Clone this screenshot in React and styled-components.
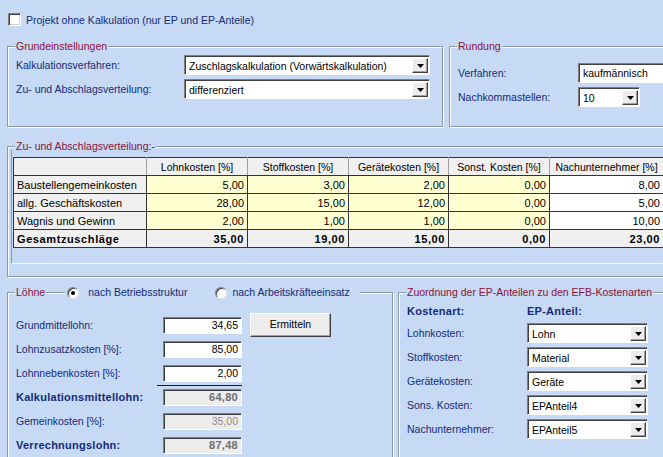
import React from "react";
import styled, { createGlobalStyle } from "styled-components";

const BG = "#c6daf5";
const NAVY = "#152a78";
const MAROON = "#8a1236";

const Global = createGlobalStyle`
  html, body { margin: 0; padding: 0; background: ${BG}; }
  body { font-family: "Liberation Sans", Arial, sans-serif; }
`;

const Page = styled.div`
  width: 663px;
  height: 457px;
  overflow: hidden;
  background: ${BG};
  padding-top: 13px;
  box-sizing: border-box;
  font-size: 10.5px;
  color: ${NAVY};
`;

const CheckRow = styled.label`
  display: flex;
  align-items: center;
  gap: 5px;
  margin-left: 8px;
  height: 13px;
`;

const CheckBox = styled.span`
  width: 13px;
  height: 13px;
  box-sizing: border-box;
  background: #fff;
  border: 1px solid;
  border-color: #808080 #fff #fff #808080;
  box-shadow: inset 1px 1px 0 #404040, inset -1px -1px 0 #d4d0c8;
`;

const Row = styled.div`
  display: flex;
  gap: ${(p) => p.$gap || 0}px;
  margin: ${(p) => p.$mt}px -20px 0 7px;
`;

const Group = styled.div`
  position: relative;
  box-sizing: border-box;
  flex: ${(p) => (p.$w ? "none" : "1")};
  width: ${(p) => (p.$w ? `${p.$w}px` : "auto")};
  height: ${(p) => p.$h}px;
  border: 1px solid #8b97ab;
  box-shadow: inset 1px 1px 0 #fff, 1px 1px 0 #fff;
  padding: ${(p) => p.$pad};
`;

const Title = styled.div`
  position: absolute;
  top: -7px;
  left: 7px;
  display: flex;
  align-items: center;
  height: 13px;
`;

const TitleText = styled.span`
  background: ${BG};
  color: ${MAROON};
  padding: 0 1px;
  line-height: 13px;
  white-space: nowrap;
`;

const RadioBar = styled.span`
  display: flex;
  align-items: center;
  margin-left: 19px;
  padding: 0 10px 0 2px;
  background: ${BG};
  line-height: 13px;
`;

const RadioItem = styled.span`
  display: flex;
  align-items: center;
  gap: ${(p) => p.$gap}px;
  margin-left: ${(p) => p.$ml || 0}px;
  white-space: nowrap;
`;

const RadioCircle = styled.span`
  width: 12px;
  height: 12px;
  box-sizing: border-box;
  border-radius: 50%;
  background: #fff;
  border: 1px solid;
  border-color: #808080 #e8e8e8 #e8e8e8 #808080;
  box-shadow: inset 1px 1px 0 #404040;
  display: flex;
  align-items: center;
  justify-content: center;
  &::after {
    content: "";
    width: 4px;
    height: 4px;
    border-radius: 50%;
    background: ${(p) => (p.$on ? "#000" : "transparent")};
  }
`;

const FormGrid = styled.div`
  display: grid;
  grid-template-columns: ${(p) => p.$cols};
  grid-template-rows: ${(p) => p.$rows};
  row-gap: ${(p) => p.$rg || 0}px;
  column-gap: ${(p) => p.$cg || 0}px;
  align-items: center;
`;

const Label = styled.span`
  color: ${NAVY};
  white-space: nowrap;
  font-weight: ${(p) => (p.$bold ? 700 : 400)};
  font-size: ${(p) => (p.$bold ? "11px" : "10.5px")};
  letter-spacing: ${(p) => (p.$bold ? "0.25px" : "0")};
`;

const Combo = styled.div`
  display: flex;
  box-sizing: border-box;
  width: ${(p) => p.$w}px;
  height: 20px;
  background: #fff;
  border: 1px solid;
  border-color: #7f7f7f #fff #fff #7f7f7f;
  box-shadow: inset 1px 1px 0 #404040;
  padding: 2px 1px 1px 2px;
  color: #000;
`;

const ComboText = styled.span`
  flex: 1;
  display: flex;
  align-items: center;
  padding-left: 2px;
  white-space: nowrap;
  overflow: hidden;
`;

const ComboButton = styled.span`
  width: 16px;
  flex: none;
  box-sizing: border-box;
  background: #ececec;
  border: 1px solid;
  border-color: #fff #404040 #404040 #fff;
  box-shadow: inset -1px -1px 0 #a0a0a0;
  display: flex;
  align-items: center;
  justify-content: center;
`;

const Field = styled.div`
  position: relative;
  box-sizing: border-box;
  width: ${(p) => p.$w}px;
  height: ${(p) => p.$h || 17}px;
  background: ${(p) => (p.$disabled ? "#ececec" : "#fff")};
  border: 1px solid;
  border-color: #7f7f7f #fff #fff #7f7f7f;
  box-shadow: inset 1px 1px 0 #404040;
  display: flex;
  align-items: center;
  justify-content: ${(p) => (p.$right ? "flex-end" : "flex-start")};
  padding: 0 3px 0 4px;
  color: ${(p) => (p.$disabled ? (p.$bold ? "#6e6e6e" : "#8c8c8c") : "#000")};
  font-weight: ${(p) => (p.$bold ? 700 : 400)};
  font-size: ${(p) => (p.$bold ? "11px" : "10.5px")};
  letter-spacing: ${(p) => (p.$bold ? "0.3px" : "0")};
  white-space: nowrap;
  &::after {
    content: "";
    display: ${(p) => (p.$underline ? "block" : "none")};
    position: absolute;
    left: -7px;
    right: -1px;
    bottom: -5px;
    height: 1px;
    background: #0b1a48;
  }
`;

const Button = styled.div`
  box-sizing: border-box;
  height: 24px;
  background: #ededed;
  border: 1px solid;
  border-color: #fff #404040 #404040 #fff;
  box-shadow: inset -1px -1px 0 #a0a0a0;
  color: #000;
  display: flex;
  align-items: center;
  justify-content: center;
  padding-bottom: 3px;
  align-self: stretch;
`;

const GridFrame = styled.div`
  margin: 3px 0 0 3px;
  height: 114px;
  box-sizing: border-box;
  border-left: 1px solid #8b97ab;
  border-bottom: 1px solid #f4f8ff;
  padding: 7px 0 0 1px;
`;

const Table = styled.table`
  border-collapse: collapse;
  table-layout: fixed;
  width: 650px;
  font-size: 11px;
  color: #000;
`;

const Th = styled.th`
  height: 17px;
  padding: 0;
  background: #f0f0f0;
  font-weight: 400;
  font-size: 10.5px;
  text-align: center;
  border: 1px solid #333;
  border-left-color: #a0a0a0;
  border-right-color: #a0a0a0;
  white-space: nowrap;
  &:first-child { border-left-color: #333; }
  &:last-child { border-right-color: #333; }
`;

const Td = styled.td`
  height: 17px;
  padding: 0 3px;
  border: 1px solid #333;
  white-space: nowrap;
  text-align: ${(p) => (p.$left ? "left" : "right")};
  background: ${(p) =>
    p.$tone === "yellow" ? "#ffffd2" : p.$tone === "white" ? "#fff" : "#f0f0f0"};
  font-weight: ${(p) => (p.$bold ? 700 : 400)};
  letter-spacing: ${(p) => (p.$bold ? "0.6px" : "0")};
`;

const Arrow = () => (
  <svg width="7" height="4" viewBox="0 0 7 4">
    <polygon points="0,0 7,0 3.5,4" fill="#000" />
  </svg>
);

const Select = ({ w, children }) => (
  <Combo $w={w}>
    <ComboText>{children}</ComboText>
    <ComboButton>
      <Arrow />
    </ComboButton>
  </Combo>
);

const cols = [133, 101, 101, 100, 101, 114];
const heads = ["", "Lohnkosten [%]", "Stoffkosten [%]", "Gerätekosten [%]", "Sonst. Kosten [%]", "Nachunternehmer [%]"];
const rows = [
  ["Baustellengemeinkosten", "5,00", "3,00", "2,00", "0,00", "8,00"],
  ["allg. Geschäftskosten", "28,00", "15,00", "12,00", "0,00", "5,00"],
  ["Wagnis und Gewinn", "2,00", "1,00", "1,00", "0,00", "10,00"],
];
const total = ["Gesamtzuschläge", "35,00", "19,00", "15,00", "0,00", "23,00"];

const mapping = [
  ["Lohnkosten:", "Lohn"],
  ["Stoffkosten:", "Material"],
  ["Gerätekosten:", "Geräte"],
  ["Sons. Kosten:", "EPAnteil4"],
  ["Nachunternehmer:", "EPAnteil5"],
];

export default function App() {
  return (
    <Page>
      <Global />
      <CheckRow>
        <CheckBox />
        <span>Projekt ohne Kalkulation (nur EP und EP-Anteile)</span>
      </CheckRow>

      <Row $mt={20} $gap={6}>
        <Group $w={436} $h={81} $pad="8px 0 0 8px">
          <Title>
            <TitleText>Grundeinstellungen</TitleText>
          </Title>
          <FormGrid $cols="168px 246px" $rows="20px 20px" $rg={4}>
            <Label>Kalkulationsverfahren:</Label>
            <Select w={246}>Zuschlagskalkulation (Vorwärtskalkulation)</Select>
            <Label>Zu- und Abschlagsverteilung:</Label>
            <Select w={246}>differenziert</Select>
          </FormGrid>
        </Group>
        <Group $h={81} $pad="16px 0 0 8px">
          <Title>
            <TitleText>Rundung</TitleText>
          </Title>
          <FormGrid $cols="120px 120px" $rows="20px 20px" $rg={4}>
            <Label>Verfahren:</Label>
            <Field $w={120} $h={20}>kaufmännisch</Field>
            <Label>Nachkommastellen:</Label>
            <Select w={62}>10</Select>
          </FormGrid>
        </Group>
      </Row>

      <Row $mt={19}>
        <Group $h={131} $pad="0">
          <Title>
            <TitleText>Zu- und Abschlagsverteilung:-</TitleText>
          </Title>
          <GridFrame>
            <Table>
              <colgroup>
                {cols.map((c, i) => (
                  <col key={i} style={{ width: c }} />
                ))}
              </colgroup>
              <thead>
                <tr>
                  {heads.map((h, i) => (
                    <Th key={i}>{h}</Th>
                  ))}
                </tr>
              </thead>
              <tbody>
                {rows.map((r, ri) => (
                  <tr key={ri}>
                    {r.map((v, i) => (
                      <Td
                        key={i}
                        $left={i === 0}
                        $tone={i === 0 ? "gray" : i === 5 ? "white" : "yellow"}
                      >
                        {v}
                      </Td>
                    ))}
                  </tr>
                ))}
                <tr>
                  {total.map((v, i) => (
                    <Td key={i} $left={i === 0} $bold $tone="gray">
                      {v}
                    </Td>
                  ))}
                </tr>
              </tbody>
            </Table>
          </GridFrame>
        </Group>
      </Row>

      <Row $mt={15} $gap={5}>
        <Group $w={386} $h={200} $pad="20px 0 0 8px">
          <Title>
            <TitleText>Löhne</TitleText>
            <RadioBar>
              <RadioItem $gap={9}>
                <RadioCircle $on />
                nach Betriebsstruktur
              </RadioItem>
              <RadioItem $gap={5} $ml={28}>
                <RadioCircle />
                nach Arbeitskräfteeinsatz
              </RadioItem>
            </RadioBar>
          </Title>
          <FormGrid $cols="139px 79px 81px" $rows="repeat(6, 24px)" $cg={8}>
            <Label>Grundmittellohn:</Label>
            <Field $w={79} $right>34,65</Field>
            <Button>Ermitteln</Button>
            <Label>Lohnzusatzkosten [%]:</Label>
            <Field $w={79} $right>85,00</Field>
            <span />
            <Label>Lohnnebenkosten [%]:</Label>
            <Field $w={79} $right $underline>2,00</Field>
            <span />
            <Label $bold>Kalkulationsmittellohn:</Label>
            <Field $w={79} $right $disabled $bold>64,80</Field>
            <span />
            <Label>Gemeinkosten [%]:</Label>
            <Field $w={79} $right $disabled>35,00</Field>
            <span />
            <Label $bold>Verrechnungslohn:</Label>
            <Field $w={79} $right $disabled $bold>87,48</Field>
            <span />
          </FormGrid>
        </Group>
        <Group $h={200} $pad="10px 0 0 8px">
          <Title>
            <TitleText>Zuordnung der EP-Anteilen zu den EFB-Kostenarten</TitleText>
          </Title>
          <FormGrid $cols="120px 121px" $rows="16px repeat(5, 20px)" $rg={4}>
            <Label $bold>Kostenart:</Label>
            <Label $bold>EP-Anteil:</Label>
            {mapping.map(([l, v]) => (
              <React.Fragment key={l}>
                <Label>{l}</Label>
                <Select w={121}>{v}</Select>
              </React.Fragment>
            ))}
          </FormGrid>
        </Group>
      </Row>
    </Page>
  );
}
